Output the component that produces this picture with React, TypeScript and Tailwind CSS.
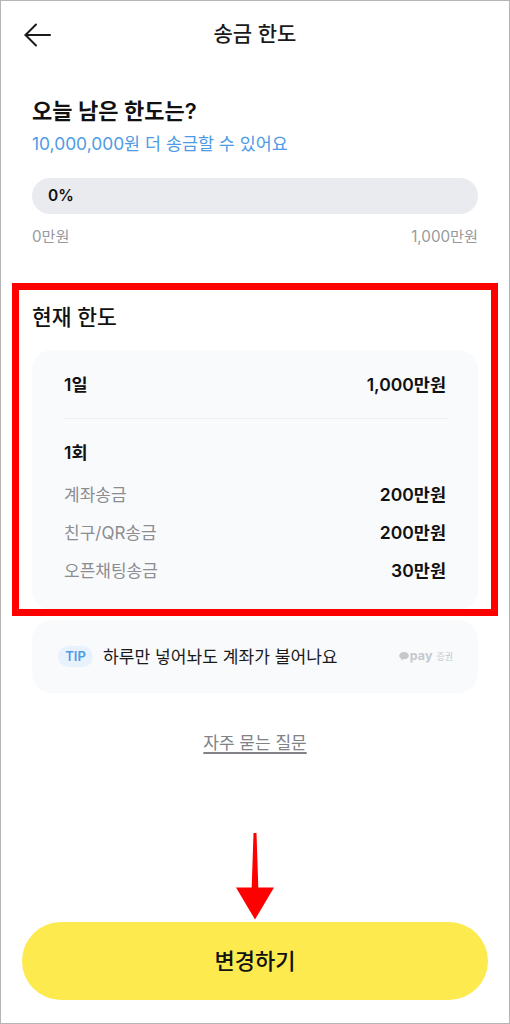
const FONT = "font-['Inter','Noto_Sans_CJK_KR',sans-serif]";

function BackArrow() {
  return (
    <svg width="28" height="24" viewBox="0 0 28 24" fill="none" stroke="#1a1a1a" strokeWidth="2" strokeLinecap="round" strokeLinejoin="round">
      <path d="M1.5 12H26" />
      <path d="M12 1.5 1.5 12 12 22.5" />
    </svg>
  );
}

function PayLogo() {
  return (
    <div className="flex items-center text-[#c6c8cc]">
      <svg width="10" height="9" viewBox="0 0 10 9" fill="#c6c8cc">
        <path d="M5 0c2.7 0 4.8 1.6 4.8 3.7S7.700 7.300 5 7.300c-.4 0-.7 0-1-.1L2.200 8.700l.3-2C1.100 6.100.2 5 .2 3.700.2 1.600 2.300 0 5 0z" />
      </svg>
      <span className="ml-[1px] text-[12.500px] font-bold leading-none">pay</span>
      <span className="ml-[4px] text-[9px] leading-none">증권</span>
    </div>
  );
}

function Row({ label, value }: { label: string; value: string }) {
  return (
    <div className="flex h-[38px] items-center justify-between">
      <span className="pt-[2px] text-[17px] text-[#8b8d91]">{label}</span>
      <span className="text-[17.500px] font-semibold text-[#111]">{value}</span>
    </div>
  );
}

export default function App() {
  return (
    <div className={`relative flex h-[1024px] w-[510px] flex-col border border-[#b5b5b5] bg-white ${FONT}`}>
      {/* header */}
      <header className="relative mt-[13px] flex h-[40px] items-center justify-center">
        <button className="absolute left-[23px] top-[9px]" aria-label="back">
          <BackArrow />
        </button>
        <h1 className="text-[21px] font-medium text-[#1a1a1a]">송금 한도</h1>
      </header>

      <main className="flex flex-col px-[31px]">
        <h2 className="mt-[42px] text-[22px] font-semibold leading-[30px] text-[#111]">오늘 남은 한도는?</h2>
        <p className="mt-[5px] text-[17.400px] leading-[26px] text-[#4d9be6]">10,000,000원 더 송금할 수 있어요</p>

        <div className="mt-[21px] flex h-[36px] items-center rounded-full bg-[#e9ebef] px-[16px]">
          <span className="text-[15.500px] font-semibold text-[#111]">0%</span>
        </div>
        <div className="mt-[11px] flex justify-between text-[15.200px] leading-[24px] text-[#97999d]">
          <span>0만원</span>
          <span>1,000만원</span>
        </div>

        <h2 className="mt-[53px] text-[21.500px] font-medium leading-[30px] text-[#111]">현재 한도</h2>

        {/* current limit card */}
        <section className="mt-[18px] h-[260px] rounded-[20px] bg-[#f9fafc] pl-[32px] pr-[30px] pt-[17px]">
          <div className="mr-[2px] flex h-[36px] items-center justify-between text-[17.500px] font-semibold text-[#111]">
            <span>1일</span>
            <span>1,000만원</span>
          </div>
          <div className="mt-[15px] h-px bg-[#eceef1]" />
          <div className="mt-[17px] flex h-[34px] items-center text-[17.500px] font-semibold text-[#111]">1회</div>
          <div className="mr-[2px] mt-[6px]">
            <Row label="계좌송금" value="200만원" />
            <Row label="친구/QR송금" value="200만원" />
            <Row label="오픈채팅송금" value="30만원" />
          </div>
        </section>

        {/* tip banner */}
        <section className="mt-[10px] flex h-[73px] items-center rounded-[20px] bg-[#f9fafc] pl-[26px] pr-[25px]">
          <span className="flex h-[21px] w-[35px] items-center justify-center rounded-full bg-[#e8f2fc] text-[13px] font-semibold text-[#4d9be6]">TIP</span>
          <span className="ml-[10px] text-[17.100px] text-[#1a1a1a]">하루만 넣어놔도 계좌가 불어나요</span>
          <div className="ml-auto">
            <PayLogo />
          </div>
        </section>

        <a className="mx-auto mt-[37px] text-[17px] leading-[26px] text-[#808286] underline decoration-[1.500px] underline-offset-[3px]">자주 묻는 질문</a>
      </main>

      <button className="absolute bottom-[23px] left-[21px] h-[78px] w-[466px] rounded-full bg-[#fcea4f] text-[22px] font-medium text-[#111]">
        변경하기
      </button>

      {/* red annotations on top of the screenshot */}
      <div className="pointer-events-none absolute left-[11px] top-[282px] h-[333px] w-[486px] border-[7px] border-[#fe0000]" />
      <svg className="pointer-events-none absolute left-[234px] top-[832px]" width="40" height="88" viewBox="0 0 40 88" fill="#fe0000">
        <path d="M18.500 0h3l1.800 54.500H39L20 86.500 1 54.500h15.700z" />
      </svg>
    </div>
  );
}
